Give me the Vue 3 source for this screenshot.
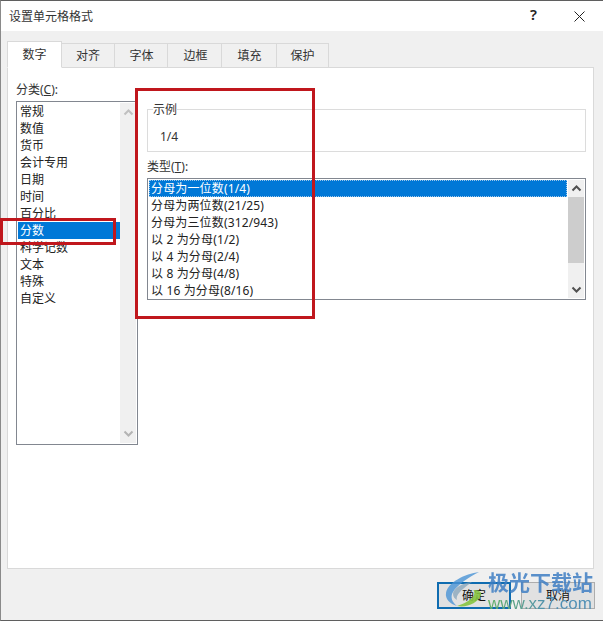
<script setup>
const tabs = ['数字', '对齐', '字体', '边框', '填充', '保护']
const cats = ['常规', '数值', '货币', '会计专用', '日期', '时间', '百分比', '分数', '科学记数', '文本', '特殊', '自定义']
const types = ['分母为一位数(1/4)', '分母为两位数(21/25)', '分母为三位数(312/943)', '以 2 为分母(1/2)', '以 4 为分母(2/4)', '以 8 为分母(4/8)', '以 16 为分母(8/16)']
</script>

<template>
  <div class="dialog">
    <header class="title">
      <span class="title-text">设置单元格格式</span>
      <div class="title-btns">
        <span class="help">?</span>
        <svg class="close" width="11" height="11" viewBox="0 0 11 11"><path d="M.5.5l10 10M10.5.5l-10 10" stroke="#222" fill="none" /></svg>
      </div>
    </header>
    <main class="body">
      <nav class="tabs">
        <span v-for="(t, i) in tabs" :key="t" class="tab" :class="{ active: i === 0 }">{{ t }}</span>
      </nav>
      <section class="panel">
        <div class="left">
          <div class="label">分类(<u>C</u>):</div>
          <div class="list cat-list">
            <div class="rows">
              <div v-for="c in cats" :key="c" class="row" :class="{ sel: c === '分数' }">{{ c }}</div>
            </div>
            <div class="scroll">
              <svg width="11" height="7" viewBox="0 0 11 7"><path d="M1.5 5.5l4-4 4 4" stroke="#c0c0c0" stroke-width="2" fill="none" /></svg>
              <svg width="11" height="7" viewBox="0 0 11 7"><path d="M1.5 1.5l4 4 4-4" stroke="#b4b4b4" stroke-width="2" fill="none" /></svg>
            </div>
          </div>
        </div>
        <div class="right">
          <fieldset class="sample">
            <legend>示例</legend>
            <div class="sample-value">1/4</div>
          </fieldset>
          <div class="label type-label">类型(<u>T</u>):</div>
          <div class="list type-list">
            <div class="rows">
              <div v-for="(t, i) in types" :key="t" class="row" :class="{ sel: i === 0, focus: i === 0 }">{{ t }}</div>
            </div>
            <div class="scroll">
              <svg width="11" height="7" viewBox="0 0 11 7"><path d="M1.5 5.5l4-4 4 4" stroke="#505050" stroke-width="2" fill="none" /></svg>
              <div class="track"><div class="thumb"></div></div>
              <svg width="11" height="7" viewBox="0 0 11 7"><path d="M1.5 1.5l4 4 4-4" stroke="#505050" stroke-width="2" fill="none" /></svg>
            </div>
          </div>
        </div>
      </section>
      <footer class="footer">
        <button class="btn primary">确定</button>
        <button class="btn">取消</button>
      </footer>
    </main>

    <div class="red red-big"></div>
    <div class="red red-small"></div>

    <div class="mark">
      <svg class="mark-logo" width="42" height="40" viewBox="0 0 42 40">
        <path d="M34 1C20 3 3 11 1 22c-1 6 4 11 11 13C7 31 5 26 8 21 12 14 24 6 34 1z" fill="#4a93d6" opacity=".8" />
        <path d="M27 11C16 12 8 18 8 23c0 3 2 5 4 6-1-4 1-8 15-18z" fill="#7f9fb8" opacity=".7" />
        <path d="M12 35c10 2 21-3 24-11 1-3-2-5-8-5 4 3 0 11-16 16z" fill="#86c440" opacity=".9" />
      </svg>
      <div class="mark-cn">极光下载站</div>
      <div class="mark-en">www.xz7.com</div>
    </div>
  </div>
</template>

<style scoped>
.dialog {
  position: relative;
  width: 603px;
  height: 621px;
  box-sizing: border-box;
  display: flex;
  flex-direction: column;
  background: #f0f0f0;
  border-top: 1px solid #5f5f5f;
  border-left: 1px solid #8a8a8a;
  border-bottom: 1px solid #5f5f5f;
  font: 12px/17px "Noto Sans", "Noto Sans CJK SC", sans-serif;
  color: #1a1a1a;
}
.title {
  height: 30px;
  flex: none;
  background: #fff;
  display: flex;
  align-items: center;
  justify-content: space-between;
  padding: 0 18px 0 8px;
}
.title-text { color: #333; }
.title-btns { display: flex; align-items: center; gap: 37px; }
.help { font-size: 15px; font-weight: 600; color: #222; padding-bottom: 3px; }
.body {
  flex: 1;
  display: flex;
  flex-direction: column;
  padding: 10px 8px 0 6px;
  min-height: 0;
}
.tabs {
  display: flex;
  align-items: flex-end;
  height: 27px;
  flex: none;
  position: relative;
  z-index: 1;
  margin-bottom: -1px;
}
.tab {
  box-sizing: border-box;
  width: 53px;
  height: 25px;
  display: flex;
  align-items: center;
  justify-content: center;
  border: 1px solid #d9d9d9;
  border-left-width: 0;
  background: #f0f0f0;
  color: #333;
}
.tab:nth-child(3) { padding-left: 1px; }
.tab:nth-child(4) { width: 54px; padding-left: 2px; }
.tab:nth-child(5) { width: 55px; padding-left: 1px; }
.tab:nth-child(6) { width: 52px; }
.tab.active {
  width: 55px;
  height: 27px;
  background: #fff;
  border-left-width: 1px;
  border-bottom-color: #fff;
}
.panel {
  flex: none;
  height: 502px;
  margin-right: 1px;
  box-sizing: border-box;
  background: #fff;
  border: 1px solid #d9d9d9;
  display: flex;
  padding: 13px 7px 0 8px;
  gap: 9px;
}
.left { width: 122px; flex: none; }
.right { flex: 1; min-width: 0; padding-top: 20px; }
.label { height: 20px; color: #333; }
.list {
  box-sizing: border-box;
  background: #fff;
  border: 1px solid #828790;
  padding: 1px;
  display: flex;
}
.cat-list { height: 344px; }
.type-list { height: 122px; gap: 1px; }
.rows { flex: 1; min-width: 0; }
.row {
  height: 17px;
  padding-left: 2px;
  white-space: pre;
  color: #222;
}
.type-list .row { letter-spacing: .15px; }
.row.sel { background: #0078d7; color: #fff; }
.focus { outline: 1px dotted #9cc7ea; outline-offset: -1px; }
.scroll {
  width: 16px;
  flex: none;
  background: #f0f0f0;
  display: flex;
  flex-direction: column;
  align-items: center;
  justify-content: space-between;
  padding: 6px 0;
  box-sizing: border-box;
}
.type-list .scroll { padding: 5px 0; }
.track { flex: 1; width: 100%; padding-top: 5px; }
.thumb { height: 66px; background: #cdcdcd; }
.sample {
  margin: 0;
  padding: 0;
  height: 51px;
  box-sizing: border-box;
  border: 1px solid #dcdcdc;
  min-width: 0;
}
.sample legend {
  margin-left: 5px;
  padding: 0;
  color: #333;
}
.sample-value { padding: 10px 0 0 12px; color: #333; }
.type-label { margin-top: 6px; }
.footer {
  flex: 1;
  display: flex;
  justify-content: flex-end;
  gap: 10px;
  padding-top: 13px;
}
.btn {
  box-sizing: border-box;
  width: 74px;
  height: 27px;
  border: 1px solid #adadad;
  background: #e1e1e1;
  font: inherit;
  color: #111;
  padding: 0;
}
.primary { border: 2px solid #0f6cb0; }
.red {
  position: absolute;
  box-sizing: border-box;
  border: 3px solid #c0171d;
  pointer-events: none;
}
.red-big { left: 134px; top: 87px; width: 180px; height: 231px; }
.red-small { left: -1px; top: 217px; width: 116px; height: 27px; }
.mark {
  position: absolute;
  left: 444px;
  top: 567px;
  width: 150px;
  height: 46px;
}
.mark-logo { position: absolute; left: 0; top: 3px; }
.mark-cn {
  position: absolute;
  left: 43px;
  top: 0;
  font: 700 21px/26px "Noto Sans CJK SC", sans-serif;
  color: #3f7fc4;
  opacity: .85;
  white-space: nowrap;
}
.mark-en {
  position: absolute;
  left: 43px;
  top: 26px;
  font: 400 17px/20px "Liberation Sans", sans-serif;
  color: #4f9aa0;
  background: linear-gradient(90deg, #62b063, #4f8fb5 60%);
  -webkit-background-clip: text;
  background-clip: text;
  -webkit-text-fill-color: transparent;
  white-space: nowrap;
}
</style>
